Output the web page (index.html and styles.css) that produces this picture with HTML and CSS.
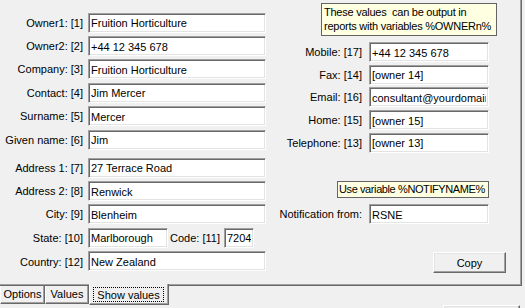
FILE: index.html
```html
<!DOCTYPE html>
<html lang="en">
  <head>
    <meta charset="UTF-8" />
    <title>Owner values</title>
    <link rel="stylesheet" href="styles.css">
  </head>
  <body>
    <div class="window">
      <div class="sheet">
        <div class="owner-col">
          <div class="fields">
            <label>Owner1: [1]</label><input type="text" value="Fruition Horticulture" />
            <label>Owner2: [2]</label><input type="text" value="+44 12 345 678" />
            <label>Company: [3]</label><input type="text" value="Fruition Horticulture" />
            <label>Contact: [4]</label><input type="text" value="Jim Mercer" />
            <label>Surname: [5]</label><input type="text" value="Mercer" />
            <label>Given name: [6]</label><input type="text" value="Jim" />
          </div>
          <div class="fields address">
            <label>Address 1: [7]</label><input type="text" value="27 Terrace Road" />
            <label>Address 2: [8]</label><input type="text" value="Renwick" />
            <label>City: [9]</label><input type="text" value="Blenheim" />
            <label>State: [10]</label>
            <div class="state-row">
              <input type="text" class="state" value="Marlborough" />
              <label>Code: [11]</label>
              <input type="text" class="code" value="7204" />
            </div>
            <label class="country">Country: [12]</label><input type="text" class="country" value="New Zealand" />
          </div>
        </div>

        <div class="contact-col">
          <div class="note">These values&nbsp; can be output in<br>reports with variables %OWNERn%</div>
          <div class="fields phones">
            <label>Mobile: [17]</label><input type="text" value="+44 12 345 678" />
            <label>Fax: [14]</label><input type="text" value="[owner 14]" />
            <label>Email: [16]</label><input type="text" value="consultant@yourdomain" />
            <label>Home: [15]</label><input type="text" value="[owner 15]" />
            <label>Telephone: [13]</label><input type="text" value="[owner 13]" />
          </div>
          <div class="note notify">Use variable %NOTIFYNAME%</div>
          <div class="fields phones notify-row">
            <label>Notification from:</label><input type="text" value="RSNE" />
          </div>
          <button class="btn copy">Copy</button>
        </div>
      </div>

      <div class="tabs">
        <div class="tab tab-options">Options</div>
        <div class="tab tab-values">Values</div>
        <div class="tab tab-show selected"><span class="focus">Show values</span></div>
        <button class="btn peek"></button>
      </div>
    </div>
  </body>
</html>
```

FILE: styles.css
```css
body {
  margin: 0;
  background: #f0f0f0;
  font-family: 'Liberation Sans', Arial, sans-serif;
  font-size: 11px;
  color: #000;
}
.window {
  width: 525px;
  height: 308px;
  overflow: hidden;
}
.sheet {
  display: flex;
  width: 522px;
  height: 286px;
  box-sizing: border-box;
  border-right: 1px solid #696969;
  border-bottom: 1px solid #696969;
  box-shadow: inset -1px -1px #a0a0a0;
}
.owner-col {
  width: 270px;
  padding-top: 12.7px;
  box-sizing: border-box;
  flex: none;
}
.fields {
  display: grid;
  grid-template-columns: 83px 178px;
  column-gap: 5px;
  grid-auto-rows: 20px;
  row-gap: 3.4px;
}
.fields label {
  justify-self: end;
  align-self: center;
  white-space: nowrap;
}
input[type="text"] {
  font: inherit;
  color: #000;
  height: 20px;
  width: 100%;
  margin: 0;
  padding: 1px 2px 0 2px;
  box-sizing: border-box;
  background: #fff;
  border: 1px solid;
  border-color: #a0a0a0 #fff #fff #a0a0a0;
  box-shadow: inset 1px 1px #696969, inset -1px -1px #e3e3e3;
  outline: none;
}
.address {
  margin-top: 8px;
}
.state-row {
  display: flex;
  align-items: center;
}
.state-row .state {
  width: 80px;
}
.state-row label {
  margin: 0 4px 0 2px;
}
.state-row .code {
  width: 30px;
}
.country {
  margin-top: 1.6px;
}

.contact-col {
  flex: 1;
  display: flex;
  flex-direction: column;
  padding-top: 3px;
}
.note {
  background: #ffffe1;
  border: 1px solid #646464;
  margin-left: 51px;
  width: 176px;
  height: 33px;
  box-sizing: border-box;
  padding: 1px 2px;
  line-height: 14px;
  white-space: nowrap;
  letter-spacing: -0.25px;
  overflow: hidden;
}
.phones {
  grid-template-columns: 92px 120px;
  column-gap: 7px;
  row-gap: 2.7px;
  margin-top: 6px;
}
.notify {
  margin: 28.7px 0 0 67px;
  width: 152px;
  height: 17px;
  line-height: 15px;
  padding: 0 1px;
  letter-spacing: -0.4px;
}
.notify-row {
  margin-top: 6px;
}
.btn {
  font: inherit;
  color: #000;
  background: #f0f0f0;
  border: 1px solid;
  border-color: #fff #696969 #696969 #fff;
  box-shadow: inset -1px -1px #a0a0a0, inset 1px 1px #e3e3e3;
  padding: 0;
}
.copy {
  margin: 28px 0 0 163px;
  width: 73px;
  height: 21px;
}

.tabs {
  display: flex;
  align-items: flex-start;
  height: 22px;
}
.tab {
  height: 18px;
  box-sizing: border-box;
  text-align: center;
  line-height: 16px;
  border-left: 1px solid #fff;
  border-right: 1px solid #696969;
  border-bottom: 1px solid #696969;
  box-shadow: inset -1px -1px #a0a0a0;
  background: #f0f0f0;
}
.tab-options {
  width: 45px;
}
.tab-values {
  width: 44px;
}
.tab-show {
  width: 80px;
  height: 21px;
  margin-top: -2px;
  padding: 3px 4px 0 3px;
}
.focus {
  display: block;
  height: 15px;
  line-height: 14px;
  border: 1px dotted #000;
  box-sizing: border-box;
}
.peek {
  margin: 19px 5px 0 auto;
  width: 77px;
  height: 21px;
  flex: none;
}
```
